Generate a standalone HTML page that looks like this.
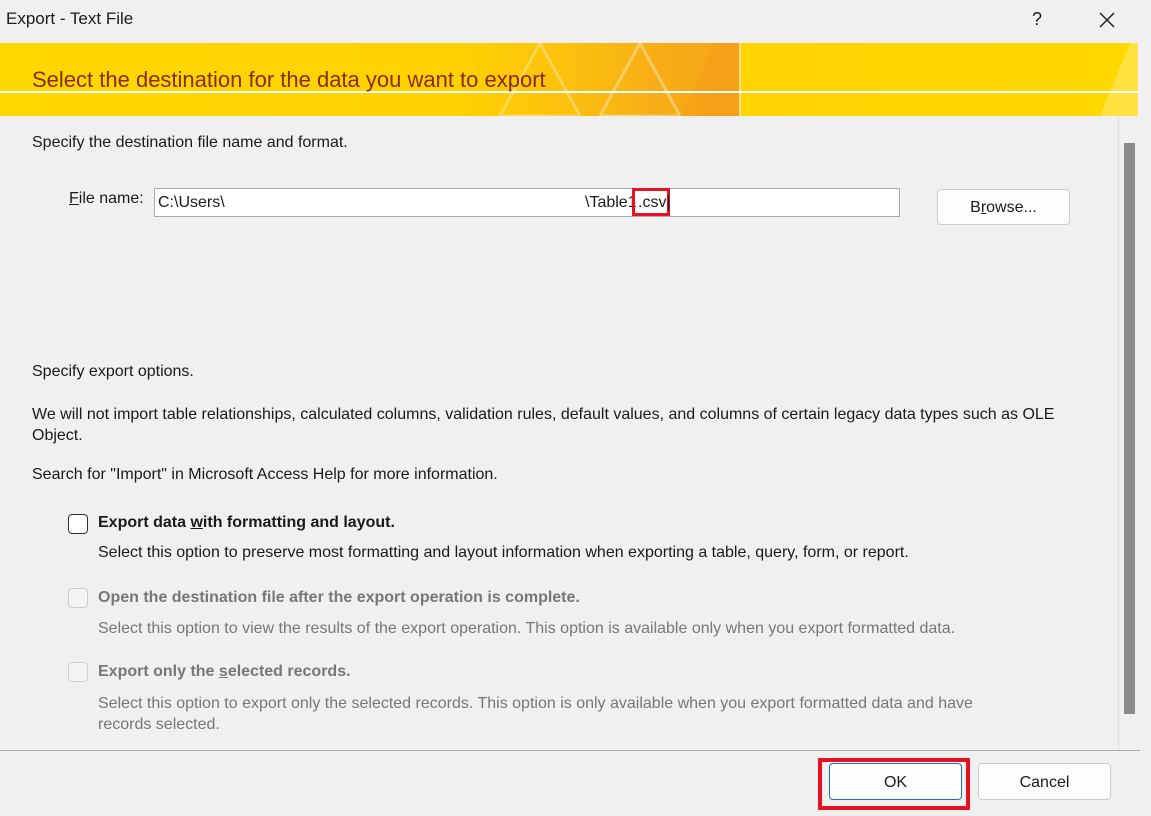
<!DOCTYPE html>
<html><head><meta charset="utf-8"><style>
*{box-sizing:border-box;margin:0;padding:0}
body{width:1151px;height:816px;background:#f0f0f0;font-family:"Liberation Sans",sans-serif;font-size:16px;color:#1a1a1a;position:relative;overflow:hidden}
.a{position:absolute}
.title{left:6px;top:9px;font-size:17px;color:#1a1a1a}
.banner{left:0;top:43px;width:1138px;height:73px;background:linear-gradient(90deg,#ffd800 0%,#ffd200 40%,#fbc00e 50%,#f7ad16 58%,#f5a418 64.9%,#ffd400 65%,#ffd800 100%)}
.bt{left:32px;top:67px;font-size:22px;color:#8a2a10}
.p{left:32px}
.gray{color:#777}
.cb{width:20px;height:20px;border:1.5px solid #333;border-radius:4px;background:#fff}
.cb.d{border-color:#ccc;background:#f4f4f4}
.btn{background:#fdfdfd;border:1px solid #ccc;border-radius:4px;text-align:center;font-size:16px}
</style></head><body>
<div class="a title">Export - Text File</div>
<div class="a" style="left:1032px;top:9px;font-size:18px">?</div>
<svg class="a" style="left:1099px;top:12px" width="16" height="16"><path d="M1 1L15 15M15 1L1 15" stroke="#222" stroke-width="1.5"/></svg>
<div class="a banner"></div>
<svg class="a" style="left:0;top:43px" width="1138" height="73">
<polygon points="500,73 540,0 580,73" fill="none" stroke="#fff" stroke-opacity=".3" stroke-width="3"/>
<polygon points="600,73 640,0 680,73" fill="none" stroke="#fff" stroke-opacity=".35" stroke-width="3"/>
<polygon points="680,73 715,0 740,0 740,73" fill="#f39c18" opacity=".45"/>
<polygon points="1100,73 1130,0 1138,0 1138,73" fill="#fff" opacity=".25"/>
<line x1="0" y1="49" x2="1138" y2="49" stroke="#fff" stroke-width="2"/>
<line x1="740" y1="0" x2="740" y2="73" stroke="#fff" stroke-width="1"/>
</svg>
<div class="a bt">Select the destination for the data you want to export</div>
<div class="a" style="left:1118px;top:116px;width:20px;height:634px;background:#f0f0f0;border-left:1px solid #ddd"></div>
<div class="a" style="left:1124px;top:143px;width:11px;height:571px;background:#8a8a8a"></div>
<div class="a p" style="top:134px">Specify the destination file name and format.</div>
<div class="a" style="left:69px;top:190px"><u>F</u>ile name:</div>
<div class="a" style="left:154px;top:188px;width:746px;height:29px;background:#fff;border:1px solid #aaa"></div>
<div class="a" style="left:158px;top:194px">C:\Users\</div>
<div class="a" style="left:585px;top:194px">\Table1</div>
<div class="a" style="left:632px;top:188px;width:38px;height:28px;border:3px solid #e81123"></div>
<div class="a" style="left:638px;top:194px">.csv|</div>
<div class="a btn" style="left:937px;top:189px;width:133px;height:36px;line-height:36px">B<u>r</u>owse...</div>
<div class="a p" style="top:363px">Specify export options.</div>
<div class="a p" style="top:404px;width:1060px;line-height:21px">We will not import table relationships, calculated columns, validation rules, default values, and columns of certain legacy data types such as OLE Object.</div>
<div class="a p" style="top:466px">Search for "Import" in Microsoft Access Help for more information.</div>
<div class="a cb" style="left:68px;top:514px"></div>
<div class="a" style="left:98px;top:514px;font-weight:bold">Export data <u>w</u>ith formatting and layout.</div>
<div class="a" style="left:98px;top:544px">Select this option to preserve most formatting and layout information when exporting a table, query, form, or report.</div>
<div class="a cb d" style="left:68px;top:588px"></div>
<div class="a gray" style="left:98px;top:589px;font-weight:bold">Open the destination file after the export operation is complete.</div>
<div class="a gray" style="left:98px;top:620px">Select this option to view the results of the export operation. This option is available only when you export formatted data.</div>
<div class="a cb d" style="left:68px;top:662px"></div>
<div class="a gray" style="left:98px;top:663px;font-weight:bold">Export only the <u>s</u>elected records.</div>
<div class="a gray" style="left:98px;top:693px;width:930px;line-height:21px">Select this option to export only the selected records. This option is only available when you export formatted data and have records selected.</div>
<div class="a" style="left:0;top:750px;width:1140px;height:1px;background:#aaa"></div>
<div class="a" style="left:818px;top:758px;width:152px;height:52px;border:4px solid #e81123"></div>
<div class="a btn" style="left:829px;top:763px;width:133px;height:37px;line-height:37px;border-color:#1a6ec0">OK</div>
<div class="a btn" style="left:978px;top:763px;width:133px;height:37px;line-height:37px">Cancel</div>
</body></html>
